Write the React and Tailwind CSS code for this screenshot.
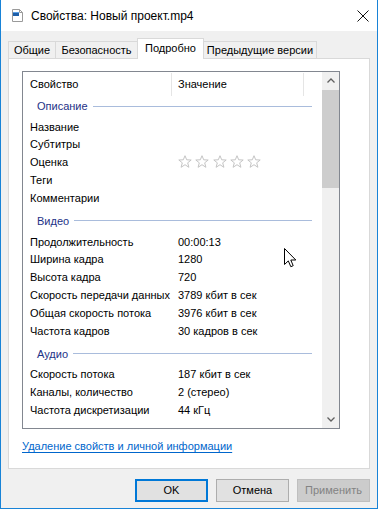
import React from "react";

const Star = () => (
  <svg width="14" height="13" viewBox="0 0 14 13">
    <polygon
      points="7,0.7 8.7,4.8 13.2,5 9.7,7.8 10.9,12.3 7,9.7 3.1,12.3 4.3,7.8 0.8,5 5.3,4.8"
      fill="white"
      stroke="#c4c4c4"
      strokeWidth="1"
      strokeLinejoin="round"
    />
  </svg>
);

function Group({ title, first, children }) {
  return (
    <>
      <div
        className={`flex items-center shrink-0 h-[18px] pl-[14px] pr-[10px] mb-[3px] ${
          first ? "mt-0" : "mt-[5px]"
        }`}
      >
        <span className="text-[#1e3287] whitespace-nowrap">{title}</span>
        <div className="flex-1 h-px bg-[#a9bcdc] ml-[5px]" />
      </div>
      {children}
    </>
  );
}

function Row({ label, value }) {
  return (
    <div className="flex items-center shrink-0 h-[17.8px]">
      <div className="w-[148px] pl-[7px] shrink-0 whitespace-nowrap overflow-hidden">
        {label}
      </div>
      <div className="pl-[7px] whitespace-nowrap">{value}</div>
    </div>
  );
}

const font = { fontFamily: "'Liberation Sans', Arial, sans-serif" };

export default function App() {
  return (
    <div
      className="w-[378px] h-[509px] flex flex-col bg-[#f0f0f0] border-x border-b border-[#1883d7] text-[11px] text-black relative overflow-hidden"
      style={font}
    >
      {/* Title bar */}
      <div className="h-[31px] bg-white flex items-center shrink-0">
        <div className="ml-[11px] w-[11px] h-[13px]">
          <svg width="11" height="13" viewBox="0 0 11 13">
            <path d="M0.5 0.5 H7.5 L10.5 3.5 V12.5 H0.5 Z" fill="#fff" stroke="#9a9a9a" />
            <path d="M7.5 0.5 V3.5 H10.5" fill="none" stroke="#9a9a9a" />
            <rect x="1" y="3" width="6" height="4" fill="#1f5fa8" />
            <rect x="1" y="3" width="6" height="1" fill="#5aa0e6" />
          </svg>
        </div>
        <div className="ml-[8px] text-[12px] whitespace-nowrap">Свойства: Новый проект.mp4</div>
        <div className="ml-auto mr-[8px] w-[12px] h-[12px]">
          <svg width="12" height="12" viewBox="0 0 12 12">
            <path d="M0.5 0.5 L11.5 11.5 M11.5 0.5 L0.5 11.5" stroke="#111" strokeWidth="1" />
          </svg>
        </div>
      </div>

      {/* Tabs */}
      <div className="mt-[7px] ml-[7px] h-[20px] flex items-end shrink-0">
        <div className="w-[48px] h-[17px] border border-b-0 border-[#d9d9d9] flex items-center justify-center whitespace-nowrap">
          Общие
        </div>
        <div className="-ml-px w-[83px] h-[17px] border border-b-0 border-[#d9d9d9] flex items-center justify-center whitespace-nowrap">
          Безопасность
        </div>
        <div className="-ml-px w-[67px] h-[21px] mb-[-1px] relative z-10 bg-white border border-b-0 border-[#d9d9d9] flex items-center justify-center whitespace-nowrap pb-[2px]">
          Подробно
        </div>
        <div className="-ml-px w-[114px] h-[17px] border border-b-0 border-[#d9d9d9] flex items-center justify-center whitespace-nowrap">
          Предыдущие версии
        </div>
      </div>

      {/* Panel */}
      <div className="mx-[7px] h-[411px] bg-white border border-[#d9d9d9] shrink-0 flex flex-col">
        <div className="mt-[12px] ml-[13px] w-[318px] h-[358px] shrink-0 border border-[#828790] flex overflow-hidden">
          <div className="w-[299px] flex flex-col overflow-hidden">
            {/* Header */}
            <div className="flex items-center h-[25px] shrink-0">
              <div className="w-[148px] pl-[7px] shrink-0">Свойство</div>
              <div className="w-px h-[23px] bg-[#e5e5e5]" />
              <div className="w-[131px] pl-[6px]">Значение</div>
              <div className="w-px h-[23px] bg-[#e5e5e5]" />
            </div>

            <Group title="Описание" first>
              <Row label="Название" value="" />
              <Row label="Субтитры" value="" />
              <div className="flex items-center shrink-0 h-[17.8px]">
                <div className="w-[148px] pl-[7px] shrink-0">Оценка</div>
                <div className="pl-[7px] flex gap-[3.3px] mt-[-1px]">
                  <Star />
                  <Star />
                  <Star />
                  <Star />
                  <Star />
                </div>
              </div>
              <Row label="Теги" value="" />
              <Row label="Комментарии" value="" />
            </Group>

            <Group title="Видео">
              <Row label="Продолжительность" value="00:00:13" />
              <Row label="Ширина кадра" value="1280" />
              <Row label="Высота кадра" value="720" />
              <Row label="Скорость передачи данных" value="3789 кбит в сек" />
              <Row label="Общая скорость потока" value="3976 кбит в сек" />
              <Row label="Частота кадров" value="30 кадров в сек" />
            </Group>

            <Group title="Аудио">
              <Row label="Скорость потока" value="187 кбит в сек" />
              <Row label="Каналы, количество" value="2 (стерео)" />
              <Row label="Частота дискретизации" value="44 кГц" />
            </Group>

            <Group title="Мультимедиа" />
          </div>

          {/* Scrollbar */}
          <div className="w-[17px] bg-[#f0f0f0] flex flex-col shrink-0">
            <div className="h-[17px] flex items-center justify-center shrink-0">
              <svg width="8" height="5" viewBox="0 0 8 5">
                <path d="M0.5 4.5 L4 1 L7.5 4.5" fill="none" stroke="#606060" strokeWidth="1.3" />
              </svg>
            </div>
            <div className="mt-[1px] h-[98px] bg-[#cdcdcd] shrink-0" />
            <div className="flex-1" />
            <div className="h-[17px] flex items-center justify-center shrink-0">
              <svg width="8" height="5" viewBox="0 0 8 5">
                <path d="M0.5 0.5 L4 4 L7.5 0.5" fill="none" stroke="#606060" strokeWidth="1.3" />
              </svg>
            </div>
          </div>
        </div>

        <div className="mt-[10px] ml-[13px] h-[15px] leading-[15px]">
          <span className="text-[#0066cc] underline underline-offset-[2px] whitespace-nowrap">
            Удаление свойств и личной информации
          </span>
        </div>
      </div>

      {/* Buttons */}
      <div className="mt-[10px] mr-[7px] flex justify-end gap-[8px] shrink-0">
        <div className="w-[73px] h-[23px] bg-[#e1e1e1] border-2 border-[#0078d7] flex items-center justify-center">
          OK
        </div>
        <div className="w-[73px] h-[23px] bg-[#e1e1e1] border border-[#adadad] flex items-center justify-center">
          Отмена
        </div>
        <div className="w-[73px] h-[23px] bg-[#cccccc] border border-[#bfbfbf] text-[#838383] flex items-center justify-center">
          Применить
        </div>
      </div>

      {/* Mouse cursor */}
      <div className="absolute left-[283px] top-[248px] z-20">
        <svg width="13" height="20" viewBox="0 0 13 20">
          <path
            d="M0.5 0.5 L0.5 16.5 L4.3 12.9 L6.8 18.7 L9.2 17.7 L6.8 12 L11.8 12 Z"
            fill="white"
            stroke="black"
            strokeWidth="1"
            strokeLinejoin="miter"
          />
        </svg>
      </div>
    </div>
  );
}
